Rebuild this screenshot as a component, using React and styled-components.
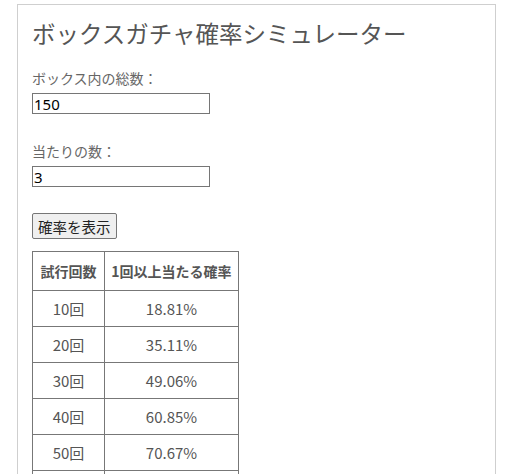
import styled, { createGlobalStyle } from "styled-components";

const GlobalStyle = createGlobalStyle`
  body {
    margin: 0;
    background: #fff;
    font-family: "Noto Sans CJK JP", "Noto Sans", sans-serif;
  }
`;

const Card = styled.div`
  margin: 4px 12px 0 17px;
  padding: 10px 14px 40px;
  border: 1px solid #cfcfcf;
  border-bottom: none;
  background: #fff;
`;

const Title = styled.h1`
  margin: 0 0 17px;
  font-size: 23.5px;
  line-height: 36px;
  font-weight: 400;
  color: #555;
`;

const Field = styled.div`
  margin-bottom: ${(p) => p.$gap}px;
`;

const Label = styled.label`
  display: block;
  font-size: 14px;
  line-height: 21px;
  color: #666;
  margin-bottom: 4px;
`;

const Input = styled.input`
  display: block;
  box-sizing: border-box;
  width: 178px;
  height: 21px;
  padding: 0 1px;
  border: 1px solid #767676;
  border-radius: 0;
  font-family: "Noto Sans", sans-serif;
  font-size: 15px;
  color: #000;
`;

const Button = styled.button`
  display: block;
  box-sizing: border-box;
  height: 26px;
  padding: 0 5px;
  margin-bottom: 12px;
  border: 1px solid #767676;
  border-radius: 2px;
  background: #efefef;
  font-family: "Noto Sans CJK JP", sans-serif;
  font-size: 14.5px;
  color: #222;
`;

const Table = styled.table`
  border-collapse: collapse;
  color: #555;
  font-size: 14px;
`;

const Th = styled.th`
  border: 1px solid #777;
  height: 38px;
  padding: 0 6px;
  font-weight: 700;
  text-align: center;
`;

const Td = styled.td`
  border: 1px solid #777;
  height: 35px;
  padding: 0 6px;
  text-align: center;
  font-size: 15px;
  width: ${(p) => p.$w}px;
`;

const rows = [
  ["10回", "18.81%"],
  ["20回", "35.11%"],
  ["30回", "49.06%"],
  ["40回", "60.85%"],
  ["50回", "70.67%"],
  ["60回", "78.81%"],
];

export default function App() {
  return (
    <>
      <GlobalStyle />
      <Card>
        <Title>ボックスガチャ確率シミュレーター</Title>
        <Field $gap={27}>
          <Label>ボックス内の総数：</Label>
          <Input defaultValue="150" />
        </Field>
        <Field $gap={26}>
          <Label>当たりの数：</Label>
          <Input defaultValue="3" />
        </Field>
        <Button>確率を表示</Button>
        <Table>
          <thead>
            <tr>
              <Th>試行回数</Th>
              <Th>1回以上当たる確率</Th>
            </tr>
          </thead>
          <tbody>
            {rows.map(([n, p]) => (
              <tr key={n}>
                <Td $w={59}>{n}</Td>
                <Td $w={121}>{p}</Td>
              </tr>
            ))}
          </tbody>
        </Table>
      </Card>
    </>
  );
}
